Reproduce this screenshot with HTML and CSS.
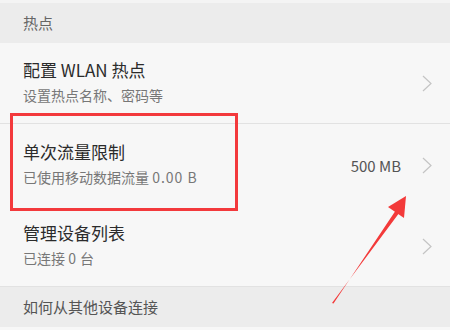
FILE: index.html
```html
<!DOCTYPE html>
<html lang="zh-CN">
<head>
<meta charset="utf-8">
<link rel="stylesheet" href="styles.css">
</head>
<body>
<div class="screen">
  <div class="top-strip"></div>
  <div class="section-header">热点</div>
  <div class="row">
    <div class="texts">
      <div class="title">配置 WLAN 热点</div>
      <div class="sub">设置热点名称、密码等</div>
    </div>
    <svg class="chev" width="10" height="17" viewBox="0 0 10 17"><path d="M1 1 L9 8.5 L1 16" fill="none" stroke="#c4c4c4" stroke-width="1.2"/></svg>
  </div>
  <div class="row">
    <div class="texts">
      <div class="title">单次流量限制</div>
      <div class="sub">已使用移动数据流量 <span class="num">0.00 B</span></div>
    </div>
    <div class="value">500 MB</div>
    <svg class="chev" width="10" height="17" viewBox="0 0 10 17"><path d="M1 1 L9 8.5 L1 16" fill="none" stroke="#c4c4c4" stroke-width="1.2"/></svg>
  </div>
  <div class="row">
    <div class="texts">
      <div class="title">管理设备列表</div>
      <div class="sub">已连接 <span class="num">0</span> 台</div>
    </div>
    <svg class="chev" width="10" height="17" viewBox="0 0 10 17"><path d="M1 1 L9 8.5 L1 16" fill="none" stroke="#c4c4c4" stroke-width="1.2"/></svg>
  </div>
  <div class="section-header footer">如何从其他设备连接</div>
  <div class="annot-box"></div>
  <svg class="annot-arrow" width="450" height="330" viewBox="0 0 450 330">
    <polygon points="332,303 333.5,303.5 396,210 399.5,212.5" fill="#f33a3a"/>
    <polygon points="406,196 388,207 404,218" fill="#f33a3a"/>
  </svg>
</div>
</body>
</html>
```
FILE: styles.css
```css
html, body {
  margin: 0;
  padding: 0;
  background: #f7f7f7;
}
.screen {
  position: relative;
  width: 450px;
  height: 330px;
  overflow: hidden;
  background: #f7f7f7;
  font-family: "Noto Sans CJK SC", "Noto Sans", sans-serif;
}
.top-strip {
  height: 3px;
  background: #f4f4f4;
}
.section-header {
  height: 40px;
  box-sizing: border-box;
  padding: 10px 0 0 23px;
  line-height: 20px;
  font-size: 15px;
  color: #666;
  background: #ececec;
}
.section-header.footer {
  color: #555;
}
.row {
  display: flex;
  align-items: center;
  height: 81px;
  box-sizing: border-box;
  padding: 0 18px 0 23px;
  border-bottom: 1px solid #e2e2e2;
}
.row:nth-of-type(4) {
  border-bottom: none;
  height: 82px;
}
.texts {
  flex: 1;
  display: flex;
  flex-direction: column;
  gap: 4px;
  padding-bottom: 2px;
}
.title {
  font-size: 17px;
  line-height: 22px;
  color: #2b2b2b;
}
.sub {
  font-size: 14px;
  line-height: 20px;
  color: #777;
}
.num {
  letter-spacing: 1px;
}
.value {
  font-size: 15px;
  color: #555;
  margin-right: 21px;
}
.chev {
  display: block;
}
.annot-box {
  position: absolute;
  left: 10px;
  top: 113px;
  width: 222px;
  height: 92px;
  border: 3px solid #f3393c;
}
.annot-arrow {
  position: absolute;
  left: 0;
  top: 0;
}
```
